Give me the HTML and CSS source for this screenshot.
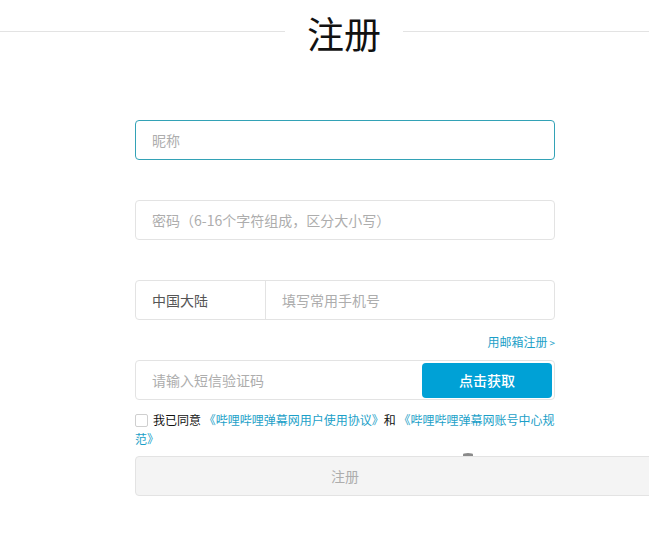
FILE: index.html
```html
<!DOCTYPE html>
<html lang="zh-CN">
<head>
<meta charset="utf-8">
<title>注册</title>
<link rel="stylesheet" href="styles.css">
</head>
<body>
<header class="head">
  <span class="line line-left"></span>
  <h1 class="title">注册</h1>
  <span class="line line-right"></span>
</header>
<form class="form">
  <div class="field focus"><input class="text" type="text" placeholder="昵称"></div>
  <div class="field"><input class="text" type="password" placeholder="密码（6-16个字符组成，区分大小写）"></div>
  <div class="field phone">
    <div class="region">中国大陆</div>
    <input class="text" type="text" placeholder="填写常用手机号">
  </div>
  <div class="alt"><a class="alt-link">用邮箱注册<span class="gt">&gt;</span></a></div>
  <div class="field sms">
    <input class="text" type="text" placeholder="请输入短信验证码">
    <button class="get" type="button">点击获取</button>
  </div>
  <p class="agree"><span class="box"></span>我已同意 <a class="link">《哔哩哔哩弹幕网用户使用协议》</a>和 <a class="link">《哔哩哔哩弹幕网账号中心规范》</a></p>
  <div class="submit-wrap">
    <span class="dot"></span>
    <button class="submit" type="button">注册</button>
  </div>
</form>
</body>
</html>
```
FILE: styles.css
```css
html, body {
  margin: 0;
  padding: 0;
  background: #fff;
  overflow: hidden;
}
body {
  width: 649px;
  height: 539px;
  font-family: "Noto Sans CJK SC", "Microsoft YaHei", sans-serif;
  color: #222;
}
.head {
  display: flex;
  align-items: center;
  height: 62px;
}
.line {
  height: 1px;
  background: #e3e3e3;
}
.line-left {
  width: 285px;
  flex: none;
}
.line-right {
  flex: 1;
}
.title {
  margin: 0;
  width: 118px;
  text-align: center;
  font-size: 37px;
  font-weight: 400;
  line-height: 62px;
  color: #111;
  position: relative;
  top: 2px;
}
.form {
  margin: 58px 0 0 135px;
  width: 420px;
}
.field {
  box-sizing: border-box;
  height: 40px;
  border: 1px solid #e3e3e3;
  border-radius: 4px;
  display: flex;
  align-items: center;
  margin-bottom: 40px;
  background: #fff;
}
.field.focus {
  border-color: #33a2b6;
}
.text {
  flex: 1;
  min-width: 0;
  height: 100%;
  border: 0;
  outline: 0;
  background: transparent;
  padding: 0 0 0 16px;
  font-family: "Noto Sans CJK SC", sans-serif;
  font-size: 14px;
  color: #333;
}
.text::placeholder {
  color: #adadad;
}
.phone {
  margin-bottom: 10px;
}
.region {
  width: 130px;
  height: 100%;
  box-sizing: border-box;
  border-right: 1px solid #e3e3e3;
  padding-left: 16px;
  display: flex;
  align-items: center;
  font-size: 14px;
  color: #555;
}
.alt {
  text-align: right;
  height: 20px;
  line-height: 20px;
  margin-bottom: 10px;
}
.alt-link {
  font-size: 12px;
  color: #1c9fc8;
}
.gt {
  font-size: 10px;
  margin-left: 2px;
}
.sms {
  margin-bottom: 10px;
}
.get {
  width: 130px;
  height: 35px;
  margin-right: 2px;
  border: 0;
  border-radius: 4px;
  background: #00a1d6;
  color: #fff;
  font-family: "Noto Sans CJK SC", sans-serif;
  font-size: 14px;
  font-weight: 500;
}
.agree {
  margin: 0 0 8px;
  font-size: 12px;
  line-height: 19px;
  color: #111;
}
.box {
  display: inline-block;
  box-sizing: border-box;
  width: 13px;
  height: 13px;
  border: 1px solid #cfcfcf;
  border-radius: 2px;
  vertical-align: -2px;
  margin-right: 5px;
  background: #fff;
}
.link {
  color: #1c9fc8;
}
.submit-wrap {
  position: relative;
}
.dot {
  position: absolute;
  left: 328px;
  top: -3px;
  width: 10px;
  height: 3px;
  border-radius: 50% 50% 0 0;
  background: #8a8a8a;
}
.submit {
  display: block;
  box-sizing: border-box;
  width: 540px;
  height: 40px;
  padding: 0 120px 0 0;
  border: 1px solid #e3e3e3;
  border-radius: 4px;
  background: #f4f4f4;
  color: #adadad;
  font-family: "Noto Sans CJK SC", sans-serif;
  font-size: 14px;
  text-align: center;
}
```
